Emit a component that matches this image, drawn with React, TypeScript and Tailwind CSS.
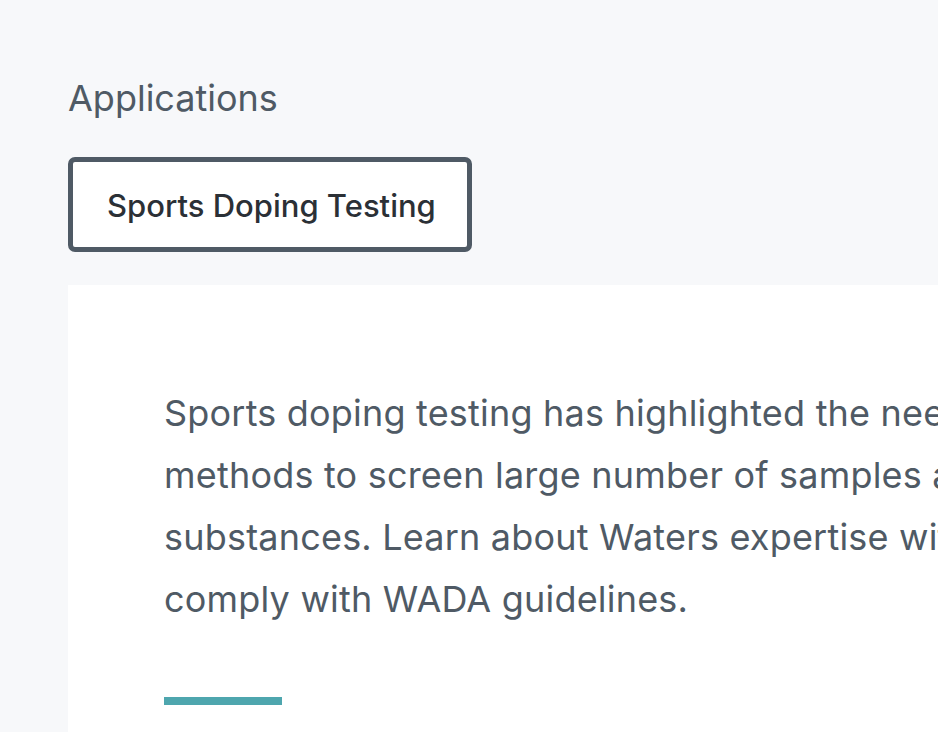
export default function App() {
  return (
    <div className="w-[938px] h-[732px] overflow-hidden bg-[#f7f8fa] font-['Inter',sans-serif]">
      <div className="pl-[68px] pt-[76px]">
        <h2 className="text-[36px] leading-[44px] text-[#4f5a65] font-normal">Applications</h2>
        <div className="mt-[37px] w-[404px] h-[95px] border-[5px] border-[#4f5a65] rounded-[7px] bg-white flex items-center pl-[34px] pt-[4px]">
          <span className="text-[31px] font-medium text-[#2b3036]">Sports Doping Testing</span>
        </div>
        <div className="mt-[33px] w-[1000px] h-[500px] bg-white pl-[96px] pt-[97px]">
          <p className="text-[36px] leading-[62px] text-[#4f5a65] whitespace-nowrap tracking-[0.2px]">
            Sports doping testing has highlighted the need for robust analytical
            <br />
            methods to screen large number of samples and detect prohibited
            <br />
            substances. Learn about Waters expertise with solutions to help labs
            <br />
            comply with WADA guidelines.
          </p>
          <div className="mt-[67px] w-[118px] h-[8px] bg-[#4ea6ae]" />
        </div>
      </div>
    </div>
  );
}
